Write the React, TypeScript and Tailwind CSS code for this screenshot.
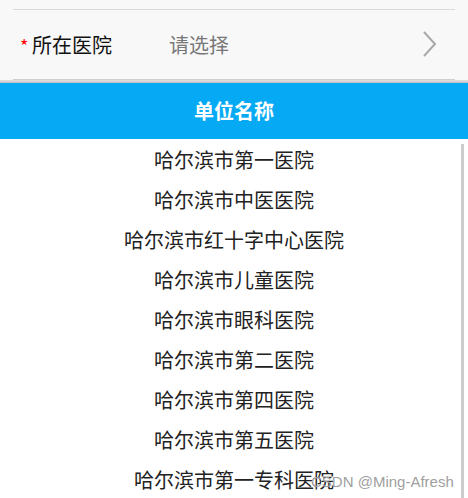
import React from "react";

const items = [
  "哈尔滨市第一医院",
  "哈尔滨市中医医院",
  "哈尔滨市红十字中心医院",
  "哈尔滨市儿童医院",
  "哈尔滨市眼科医院",
  "哈尔滨市第二医院",
  "哈尔滨市第四医院",
  "哈尔滨市第五医院",
  "哈尔滨市第一专科医院",
];

export default function App() {
  return (
    <div
      className="relative w-[468px] h-[498px] overflow-hidden bg-white"
      style={{ fontFamily: '"Noto Sans CJK SC", "Noto Sans", sans-serif' }}
    >
      <div className="bg-[#f8f8f8] pt-[9px]">
        <div className="mx-[13px] h-px bg-[#d9d9d9]" />
        <div className="flex h-[69px] items-center pl-[20px] pr-[30px]">
          <span className="w-[12px] text-[18px] leading-none text-[#ff0000]">*</span>
          <span className="w-[137px] text-[20px] text-[#111]">所在医院</span>
          <span className="flex-1 text-[20px] text-[#777]">请选择</span>
          <svg width="16" height="28" viewBox="0 0 16 28" className="mt-[-2px]">
            <path d="M2 2 L13 14 L2 26" fill="none" stroke="#a8a8a8" strokeWidth="2" />
          </svg>
        </div>
        <div className="mx-[13px] h-px bg-[#cfcfcf]" />
        <div className="h-[3px] bg-gradient-to-b from-[#e4e4e4] to-[#bdbdbd]" />
      </div>
      <div className="flex h-[56px] items-center justify-center bg-[#05a9f4] text-[20px] font-bold text-white">
        单位名称
      </div>
      <div className="relative pt-px">
        {items.map((t) => (
          <div key={t} className="flex h-[40px] items-center justify-center text-[20px] text-[#222]">
            {t}
          </div>
        ))}
        <div className="absolute right-[4px] top-[5px] h-[400px] w-[3px] bg-[#cdcdcd]" />
      </div>
      <div
        className="absolute left-[311px] top-[471px] text-[15px] text-[#a0a0a0]"
        style={{ fontFamily: '"Liberation Sans", Arial, sans-serif' }}
      >
        CSDN @Ming-Afresh
      </div>
    </div>
  );
}
